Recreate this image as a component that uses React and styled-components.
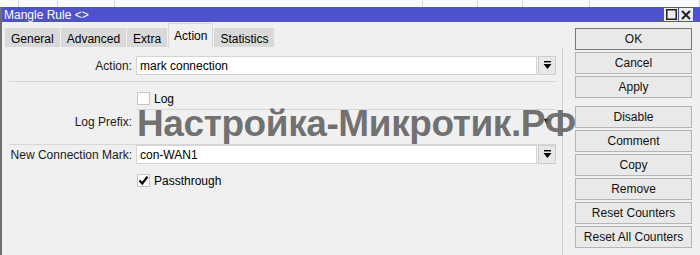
import React from 'react';
import styled, { createGlobalStyle } from 'styled-components';

const GlobalStyle = createGlobalStyle`
  html, body {
    margin: 0;
    padding: 0;
    background: #f0f0f0;
  }
  body {
    font-family: "Liberation Sans", Arial, sans-serif;
    font-size: 12px;
    color: #000;
  }
`;

const headerCols = [19, 39, 57, 308, 55, 45, 67, 110];
const sideButtons = ['OK', 'Cancel', 'Apply', null, 'Disable', 'Comment', 'Copy', 'Remove', 'Reset Counters', 'Reset All Counters'];
const tabs = ['General', 'Advanced', 'Extra', 'Action', 'Statistics'];

function DropIcon() {
  return (
    <svg width="9" height="9" viewBox="0 0 9 9">
      <rect x="1" y="0" width="7" height="1.4" fill="#000" />
      <path d="M0.5 3 L8.5 3 L4.5 8 Z" fill="#000" />
    </svg>
  );
}

function App() {
  return (
    <Page>
      <GlobalStyle />
      <HeaderStrip>
        {headerCols.map((w, i) => (
          <HeaderCell key={i} $w={w} />
        ))}
      </HeaderStrip>

      <Window>
        <TitleBar>
          <Title>Mangle Rule &lt;&gt;</Title>
          <TitleButtons>
            <TitleButton>
              <svg width="11" height="11" viewBox="0 0 11 11">
                <rect x="0.75" y="0.75" width="9.5" height="9.5" fill="none" stroke="#222" strokeWidth="1.5" />
              </svg>
            </TitleButton>
            <TitleButton>
              <svg width="10" height="10" viewBox="0 0 10 10">
                <path d="M1 1 L9 9 M9 1 L1 9" stroke="#222" strokeWidth="2" />
              </svg>
            </TitleButton>
          </TitleButtons>
        </TitleBar>

        <Body>
          <Main>
            <TabBar>
              {tabs.map((t) => (
                <Tab key={t} $active={t === 'Action'}>{t}</Tab>
              ))}
            </TabBar>

            <Panel>
              <Row>
                <Label>Action:</Label>
                <Field>
                  <Input>mark connection</Input>
                  <DropButton><DropIcon /></DropButton>
                </Field>
              </Row>

              <Separator />

              <CheckRow>
                <Box />
                <span>Log</span>
              </CheckRow>

              <PrefixRow>
                <Label>Log Prefix:</Label>
                <Collapsed>
                  <ArrowDown>▼</ArrowDown>
                </Collapsed>
              </PrefixRow>

              <Separator />

              <Row>
                <Label>New Connection Mark:</Label>
                <Field>
                  <Input>con-WAN1</Input>
                  <DropButton><DropIcon /></DropButton>
                </Field>
              </Row>

              <CheckRow $top={10}>
                <Box>
                  <svg width="11" height="11" viewBox="0 0 11 11">
                    <path d="M1.5 5.5 L4.2 8.5 L9.5 1.8" fill="none" stroke="#000" strokeWidth="2.2" />
                  </svg>
                </Box>
                <span>Passthrough</span>
              </CheckRow>
            </Panel>
          </Main>

          <Side>
            {sideButtons.map((b, i) =>
              b ? (
                <SideButton key={i} $default={b === 'OK'}>{b}</SideButton>
              ) : (
                <SideGap key={i} />
              )
            )}
          </Side>
        </Body>
      </Window>

      <Watermark>Настройка-Микротик.РФ</Watermark>
    </Page>
  );
}

const Page = styled.div`
  position: relative;
  width: 700px;
  height: 255px;
  overflow: hidden;
  background: #f0f0f0;
`;

const HeaderStrip = styled.div`
  display: flex;
  height: 7px;
  background: #fbfbfb;
`;

const HeaderCell = styled.div`
  flex: 0 0 ${(p) => p.$w}px;
  border-right: 1px solid #d6d6d6;
  box-sizing: border-box;
`;

const Window = styled.div`
  border-left: 2px solid #6f6f6f;
  height: 248px;
  display: flex;
  flex-direction: column;
`;

const TitleBar = styled.div`
  height: 15px;
  background: #4e52cd;
  display: flex;
  align-items: center;
  justify-content: space-between;
  padding-left: 2px;
  padding-right: 7px;
`;

const Title = styled.span`
  color: #fff;
  font-size: 12px;
`;

const TitleButtons = styled.div`
  display: flex;
  gap: 1px;
`;

const TitleButton = styled.div`
  width: 14px;
  height: 13px;
  background: #ececec;
  display: flex;
  align-items: center;
  justify-content: center;
`;

const Body = styled.div`
  flex: 1;
  display: flex;
  align-items: stretch;
`;

const Main = styled.div`
  width: 561px;
  display: flex;
  flex-direction: column;
`;

const TabBar = styled.div`
  height: 25px;
  display: flex;
  align-items: flex-end;
  gap: 1px;
  padding-left: 3px;
`;

const Tab = styled.div`
  height: ${(p) => (p.$active ? 24 : 19)}px;
  padding: 0 5px;
  display: flex;
  align-items: center;
  box-sizing: border-box;
  background: ${(p) => (p.$active ? '#f0f0f0' : '#d9d9d9')};
  border: 1px solid #d9d9d9;
  border-bottom: none;
  padding-top: ${(p) => (p.$active ? 0 : 1)}px;
`;

const Panel = styled.div`
  flex: 1;
  border-right: 1px solid #d2d2d2;
  padding-top: 9px;
  padding-right: 6px;
`;

const Row = styled.div`
  display: grid;
  grid-template-columns: 130px 1fr;
  column-gap: 4px;
  align-items: center;
  height: 19px;
`;

const Label = styled.div`
  text-align: right;
  white-space: nowrap;
  color: #1a1a1a;
`;

const Field = styled.div`
  display: flex;
  gap: 1px;
  height: 19px;
`;

const Input = styled.div`
  flex: 1;
  background: #fff;
  border: 1px solid #d4d4d4;
  box-sizing: border-box;
  padding: 0 3px;
  display: flex;
  align-items: center;
`;

const DropButton = styled.div`
  width: 18px;
  box-sizing: border-box;
  background: #e8e8e8;
  border: 1px solid #cdcdcd;
  display: flex;
  align-items: center;
  justify-content: center;
`;

const Separator = styled.div`
  height: 1px;
  background: #d6d6d6;
  margin: 6px 0 0 7px;
`;

const CheckRow = styled.div`
  display: flex;
  align-items: center;
  gap: 4px;
  margin-top: ${(p) => p.$top ?? 10}px;
  margin-left: 135px;
  height: 13px;
`;

const Box = styled.div`
  width: 13px;
  height: 13px;
  box-sizing: border-box;
  background: #fff;
  border: 1px solid #c4c4c4;
  display: flex;
  align-items: center;
  justify-content: center;
`;

const PrefixRow = styled.div`
  display: grid;
  grid-template-columns: 130px 1fr;
  column-gap: 4px;
  align-items: center;
  height: 33px;
`;

const Collapsed = styled.div`
  height: 100%;
  border-top: 1px solid #d6d6d6;
  margin-top: 7px;
  box-sizing: border-box;
  display: flex;
  justify-content: flex-end;
  align-items: center;
  padding-right: 5px;
`;

const ArrowDown = styled.span`
  font-size: 9px;
  line-height: 1;
  margin-top: -8px;
`;

const Side = styled.div`
  flex: 1;
  padding: 6px 0 0 12px;
  display: flex;
  flex-direction: column;
  gap: 2px;
`;

const SideButton = styled.div`
  width: 117px;
  height: 22px;
  box-sizing: border-box;
  background: #e9e9e9;
  border: 1px solid ${(p) => (p.$default ? '#777' : '#b5b5b5')};
  display: flex;
  align-items: center;
  justify-content: center;
  color: #111;
`;

const SideGap = styled.div`
  height: 4px;
`;

const Watermark = styled.div`
  position: absolute;
  left: 137px;
  top: 102px;
  font-family: "Liberation Sans", Arial, sans-serif;
  font-weight: bold;
  font-size: 37px;
  letter-spacing: -0.4px;
  line-height: 44px;
  color: rgba(95, 95, 95, 0.88);
  white-space: nowrap;
  pointer-events: none;
`;

export default App;
